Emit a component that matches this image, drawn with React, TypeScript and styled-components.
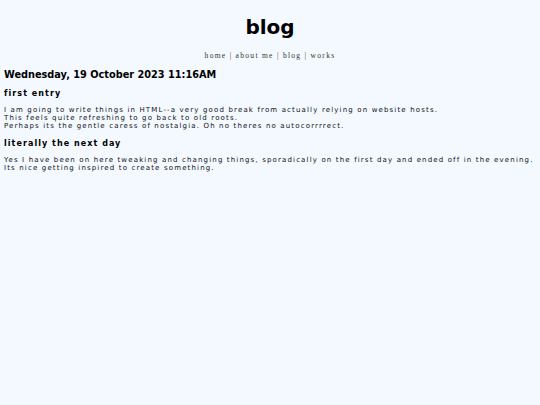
import React from 'react';
import styled, { createGlobalStyle } from 'styled-components';

const GlobalStyle = createGlobalStyle`
  html, body {
    margin: 0;
    padding: 0;
    background: #f3f9ff;
  }
  body {
    font-family: "DejaVu Sans", Verdana, sans-serif;
    color: #000;
  }
`;

const Page = styled.div`
  padding: 0 4px;
`;

const Title = styled.h1`
  margin: 0;
  padding-top: 14px;
  text-align: center;
  font-size: 20px;
  line-height: 26px;
  font-weight: bold;
`;

const Nav = styled.nav`
  margin-top: 11px;
  text-align: center;
  font-family: "Liberation Serif", "Times New Roman", serif;
  font-size: 7.5px;
  letter-spacing: 1.3px;
  color: #333;
  line-height: 10px;

  a {
    color: inherit;
    text-decoration: none;
  }
`;

const DateHeading = styled.h2`
  margin: 7px 0 0;
  font-size: 9.75px;
  line-height: 14px;
  font-weight: bold;
`;

const Entry = styled.section`
  margin-top: 6px;

  & + & {
    margin-top: 8px;
  }
`;

const EntryTitle = styled.h3`
  margin: 0;
  font-size: 8px;
  line-height: 12px;
  font-weight: bold;
  letter-spacing: 1.05px;
`;

const Body = styled.p`
  margin: 6px 0 0;
  font-size: 7px;
  line-height: 8px;
  letter-spacing: 1.15px;
  color: #111;
`;

const entries = [
  {
    title: 'first entry',
    lines: [
      'I am going to write things in HTML--a very good break from actually relying on website hosts.',
      'This feels quite refreshing to go back to old roots.',
      'Perhaps its the gentle caress of nostalgia. Oh no theres no autocorrrrect.',
    ],
  },
  {
    title: 'literally the next day',
    lines: [
      'Yes I have been on here tweaking and changing things, sporadically on the first day and ended off in the evening.',
      'Its nice getting inspired to create something.',
    ],
  },
];

const links = ['home', 'about me', 'blog', 'works'];

export default function App() {
  return (
    <>
      <GlobalStyle />
      <Page>
        <Title>blog</Title>
        <Nav>
          {links.map((l, i) => (
            <React.Fragment key={l}>
              {i > 0 && ' | '}
              <a href="#">{l}</a>
            </React.Fragment>
          ))}
        </Nav>
        <DateHeading>Wednesday, 19 October 2023 11:16AM</DateHeading>
        {entries.map((e) => (
          <Entry key={e.title}>
            <EntryTitle>{e.title}</EntryTitle>
            <Body>
              {e.lines.map((line, i) => (
                <React.Fragment key={i}>
                  {i > 0 && <br />}
                  {line}
                </React.Fragment>
              ))}
            </Body>
          </Entry>
        ))}
      </Page>
    </>
  );
}
